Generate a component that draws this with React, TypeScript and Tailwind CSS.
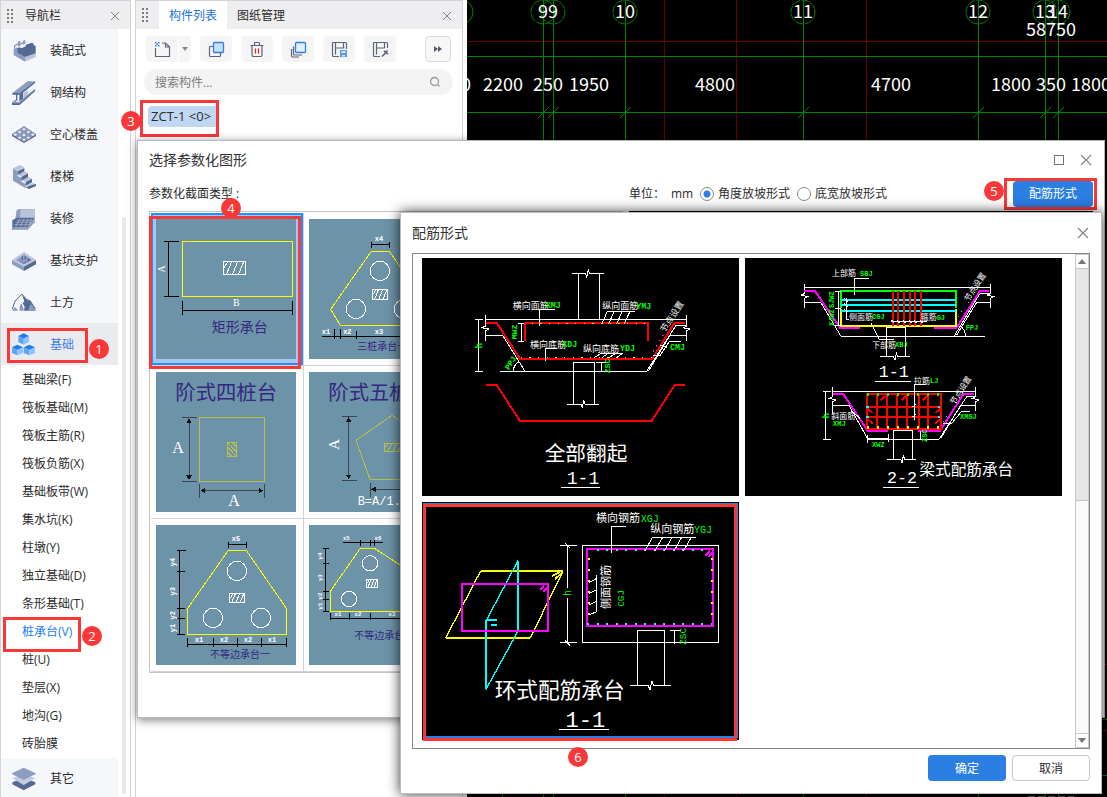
import type { ReactNode } from "react";

const SANS = "'Open Sans','Noto Sans CJK SC',sans-serif";
const MONO = "'Liberation Mono','Noto Sans CJK SC',monospace";
const SERIF = "'Liberation Serif','Noto Sans CJK SC',serif";

type LabelProps = {
  x: number;
  y: number;
  s: number;
  c?: string;
  f?: string;
  mid?: boolean;
  rot?: number;
  w?: number;
  children: ReactNode;
};

/* Text inside a drawing; `rot` turns it around its own centre. */
function Label({ x, y, s, c = "#fff", f = MONO, mid, rot, w = 400, children }: LabelProps) {
  const turned = rot !== undefined;
  return (
    <text
      x={x}
      y={turned ? y + s * 0.35 : y}
      fontSize={s}
      fill={c}
      fontFamily={f}
      fontWeight={w}
      textAnchor={mid || turned ? "middle" : "start"}
      transform={turned ? `rotate(${rot} ${x} ${y})` : undefined}
    >
      {children}
    </text>
  );
}

function Line({ d, c = "#fff", w = 3, dash }: { d: string; c?: string; w?: number; dash?: string }) {
  return <path d={d} fill="none" stroke={c} strokeWidth={w} strokeDasharray={dash} />;
}

function Hatch({ x, y, w, h, c = "#fff" }: { x: number; y: number; w: number; h: number; c?: string }) {
  const q = w / 4;
  return (
    <Line
      c={c}
      d={`M${x} ${y}h${w}v${h}h${-w}zM${x + 3} ${y + h / 2}l${q * 0.7} ${-h / 2}M${x + q * 0.6} ${y + h}l${q} ${-h}M${x + q * 1.7} ${y + h}l${q} ${-h}M${x + q * 2.8} ${y + h}l${q} ${-h}`}
    />
  );
}

/* ---------- navigation icons ---------- */

const DK = "#546a93";
const MD = "#8d9dbf";
const LT = "#b9c4dc";

function NavIcon({ name }: { name: string }) {
  const box: Record<string, string> = {
    precast: "36 117 72 72",
    steel: "36 240 72 72",
    hollow: "36 366 72 72",
    stairs: "36 492 72 72",
    finish: "36 618 72 72",
    pit: "36 747 72 72",
    earth: "36 872 72 72",
    base: "36 40 72 72",
    other: "36 1338 72 72",
  };
  const art: Record<string, ReactNode> = {
    precast: (
      <>
        <path d="M42 136l12-6v-5l4-3 3 3v5l8-3v-5l4-2 3 2v9l-30 12-4 8z" fill={MD} />
        <path d="M46 138l8-3v5l-8 4zM61 134l8-3v5l-8 3z" fill="#f5f7fa" />
        <path d="M41 148l12-6v16l22 13v14l-34-20z" fill={MD} />
        <path d="M75 171l32-13v13l-32 14z" fill={LT} />
        <path d="M52 144l8-2 4 3 14-6-2-4 20-7 5 3v5l6 2v22l-32 11-23-13z" fill={DK} />
      </>
    ),
    steel: (
      <>
        <path d="M37 276l46-35h22l-47 36z" fill={MD} />
        <path d="M58 277l47-36v5l-36 29v20l-11 6z" fill={DK} />
        <path d="M37 276h21v5h-6v18h-4v-18H37z" fill={DK} />
        <path d="M70 277l14-10v16l-14 12z" fill={LT} />
        <path d="M60 302l45-38v7l-46 41H36v-6h18z" fill={DK} />
        <path d="M36 304l12-9v7l8 1 46-37 3 1-46 40H36z" fill={MD} />
      </>
    ),
    hollow: (
      <>
        <path d="M36 400l36-24 36 24v5l-36 21-36-21z" fill={DK} />
        <path d="M36 400l36-24 36 24-36 22z" fill={MD} />
        <path
          d="M72 380l8 5-8 5-8-5zM59 388l8 5-8 5-8-5zM85 388l8 5-8 5-8-5zM72 397l8 5-8 5-8-5zM46 396l8 5-8 5-8-5zM98 396l8 5-8 5-8-5zM59 405l8 5-8 5-8-5zM85 405l8 5-8 5-8-5zM72 412l8 4-8 5-8-5z"
          fill="#eef1f8"
          stroke={DK}
          strokeWidth="1.5"
        />
      </>
    ),
    stairs: (
      <>
        <path d="M39 502l14 9v14l11 5v12l13 6v14l-38-23z" fill={MD} />
        <path d="M39 502l20-10 14 7-20 11zM53 521l20-10 10 5-19 11zM64 537l20-10 10 5-18 11zM80 554l18-9 10 6-20 9z" fill={LT} />
        <path d="M53 511l20-10v10l-20 11zM64 528l20-11v11l-20 11zM77 543l19-10v11l-19 11zM86 556l22-7v6l-21 9-10-5z" fill={DK} />
      </>
    ),
    finish: (
      <>
        <path d="M50 627l8-3h46v36l-6 4H44z" fill={MD} />
        <path d="M62 625h43v35H60z" fill={LT} />
        <path d="M37 658l13-8h54l-21 29-46 1z" fill={DK} />
        <path d="M36 680l45-1 24-25v9l-22 23H36z" fill={MD} />
        <path d="M51 658h46M47 664h45M42 671h46M60 653l-13 24M72 653l-11 24M84 653l-9 24M95 653l-8 20" stroke={LT} strokeWidth="1.8" />
      </>
    ),
    pit: (
      <>
        <path d="M36 780l36 19v14l-36-20z" fill={MD} />
        <path d="M108 780l-36 19v14l36-20z" fill={DK} />
        <path d="M36 780l36-24 36 24-36 20z" fill={LT} />
        <path d="M50 780l22-14 22 14-22 12z" fill={DK} />
        <path d="M60 771l5-3v13h4v-15l5-3v16h4v-12l5 4v12l-12 6-12-5z" fill={MD} />
        <path d="M50 780l10-7v12z" fill={MD} />
      </>
    ),
    earth: (
      <>
        <path d="M37 926l8-24 7-6 14-15 13 16 11 4 17 26" fill="none" stroke={DK} strokeWidth="3" />
        <path d="M65 882l8 22-5 8 7 19h-9l-4-20-3-6z" fill="#f5f7fa" />
        <path d="M66 883l15 16 10 4 16 28H72l2-12-6-10 5-6z" fill={DK} />
        <path d="M58 931l2-16 5-6 7 22z" fill={MD} />
        <path d="M37 930l8-10 8 8v3H37zM92 910l15 21H84z" fill={MD} />
      </>
    ),
    base: (
      <>
        <path d="M55 49l16-8 16 8-16 8zM36 83l16-8 17 8-17 8zM71 83l17-8 17 8-17 8z" fill="#1f7af0" />
        <path d="M55 49l16 8v18l-16-8zM36 83l16 8v16l-16-7zM71 83l17 8v16l-17-7z" fill="#5ba3f8" />
        <path d="M87 49l-16 8v18l16-8zM69 83l-17 8v16l17-7zM105 83l-17 8v16l17-7z" fill="#8cc2ff" />
      </>
    ),
    other: (
      <>
        <path d="M37 1384l34-14 35 14v6l-35 18-34-18z" fill={DK} />
        <path d="M37 1372l34-14 35 14-35 20z" fill="#c4cde0" />
        <path d="M36 1357l35-17 36 17v2l-36 18-35-18z" fill={MD} />
      </>
    ),
  };
  return (
    <svg viewBox={box[name]} className="size-6 shrink-0" aria-hidden="true">
      {art[name]}
    </svg>
  );
}

/* ---------- toolbar icons ---------- */

function ToolIcon({ name }: { name: string }) {
  const g = "#5b6478";
  const b = "#2f7fe6";
  const art: Record<string, ReactNode> = {
    new: (
      <>
        <path d="M1.5 7v8.5h14V6l-4-4H8M11.500 2v4h4" fill="none" stroke={g} strokeWidth="1.200" />
        <path d="M1 1h1.500v1.500H1zM4 1h1.500v1.500H4zM2.500 2.500H4V4H2.500zM1 4h1.500v1.500H1zM4 4h1.500v1.500H4z" fill={b} />
      </>
    ),
    copy: (
      <>
        <path d="M5 5.500H2.500a1 1 0 0 0-1 1v8a1 1 0 0 0 1 1h9a1 1 0 0 0 1-1V12" fill="none" stroke={g} strokeWidth="1.200" />
        <rect x="5.500" y="1.500" width="10" height="10" rx="1" fill="#c9dffb" stroke={b} strokeWidth="1.300" />
      </>
    ),
    trash: (
      <>
        <path d="M1.500 4.500h13M5.500 4V2.500a1 1 0 0 1 1-1h3a1 1 0 0 1 1 1V4M3 5v9a1.500 1.500 0 0 0 1.500 1.500h7A1.500 1.500 0 0 0 13 14V5" fill="none" stroke={g} strokeWidth="1.200" />
        <path d="M6.500 7.500v5M9.500 7.500v5" stroke="#e02020" strokeWidth="1.200" />
      </>
    ),
    layers: (
      <>
        <path d="M3.500 5.500v7.500a1 1 0 0 0 1 1H12M1.500 8v7a1 1 0 0 0 1 1H9" fill="none" stroke={g} strokeWidth="1.200" />
        <rect x="5.500" y="1.500" width="10" height="10" rx="1" fill="#e3effd" stroke={b} strokeWidth="1.300" />
      </>
    ),
    save: (
      <>
        <path d="M8 15.500H2.500a1 1 0 0 1-1-1v-12a1 1 0 0 1 1-1h12a1 1 0 0 1 1 1V8M4.500 2v11.500M4.500 7h9M12.500 2v5" fill="none" stroke={g} strokeWidth="1.200" />
        <rect x="9" y="9" width="7" height="7" fill="#5b9bea" />
        <path d="M10.500 10h4v2h-4zM11 14h3v1.500h-3z" fill="#d6e6fb" />
      </>
    ),
    edit: (
      <>
        <path d="M8 15.500H2.500a1 1 0 0 1-1-1v-12a1 1 0 0 1 1-1h12a1 1 0 0 1 1 1V7M4.500 2v11.500M4.500 7h8M12.500 2v5" fill="none" stroke={g} strokeWidth="1.200" />
        <path d="M10 15.500l4-4M12 10l4 3M13.500 11.500l2-2" stroke={g} strokeWidth="1.600" />
      </>
    ),
  };
  return (
    <svg viewBox="0 0 17 17" className="size-[17px]" aria-hidden="true">
      {art[name]}
    </svg>
  );
}

function Cross({ className }: { className: string }) {
  return (
    <svg viewBox="0 0 12 12" className={className} aria-hidden="true">
      <path d="M1 1l10 10M11 1L1 11" stroke="#858585" strokeWidth="1.200" fill="none" />
    </svg>
  );
}

function Grip() {
  return (
    <svg viewBox="0 0 6 14" className="h-3.5 w-1.5 shrink-0" aria-hidden="true">
      <path d="M0 0h2v2H0zM4 0h2v2H4zM0 4h2v2H0zM4 4h2v2H4zM0 8h2v2H0zM4 8h2v2H4zM0 12h2v2H0zM4 12h2v2H4z" fill="#7b7b7b" />
    </svg>
  );
}

/* ---------- section-type thumbnails ---------- */

const NAVY = "#33297f";
const Y = "#ffff00";
const K = "#000";
const OLIVE = "#b9c04a";

const thumbs: { name: string; box: string; art: ReactNode }[] = [
  {
    name: "矩形承台",
    box: "48 42 420 420",
    art: (
      <>
        <Line c={Y} d="M127 109H458V274H127Z" />
        <Line c={K} d="M72 109H117M85 109V274M72 274H117M127 287V329M458 287V329M127 316H458" />
        <Hatch x={249} y={169} w={66} h={40} />
        <Label x={65} y={192} s={30} f={SERIF} rot={-90}>A</Label>
        <Label x={289} y={304} s={30} f={SERIF} mid>B</Label>
        <Label x={215} y={382} s={42} c={NAVY}>矩形承台</Label>
      </>
    ),
  },
  {
    name: "三桩承台一",
    box: "507 42 420 420",
    art: (
      <>
        <Line c={K} d="M694 119H749M694 110V128M749 110V128M546 394H900M583 372V402M601 372V402M649 378V402" />
        <Line c={Y} d="M601 361L572 313L694 139H748L870 313L841 361Z" />
        <circle cx="720" cy="198" r="29" fill="none" stroke="#fff" strokeWidth="3" />
        <circle cx="648" cy="312" r="29" fill="none" stroke="#fff" strokeWidth="3" />
        <circle cx="792" cy="312" r="29" fill="none" stroke="#fff" strokeWidth="3" />
        <Hatch x={697} y={253} w={46} h={30} />
        <Label x={717} y={109} s={21} w={700} mid>x4</Label>
        <Label x={558} y={386} s={21} w={700} mid>x1</Label>
        <Label x={622} y={386} s={21} w={700} mid>x2</Label>
        <Label x={717} y={386} s={21} w={700} mid>x3</Label>
        <Label x={652} y={436} s={30} c={NAVY}>三桩承台一</Label>
      </>
    ),
  },
  {
    name: "阶式四桩台",
    box: "48 501 420 420",
    art: (
      <>
        <Label x={106} y={586} s={61} c={NAVY}>阶式四桩台</Label>
        <Line c={OLIVE} d="M179 637H373V829H179Z" />
        <Line c="#3b4650" d="M147 645V822M127 637H171M127 829H171M179 838V880M373 838V880M190 857H362" />
        <path d="M147 639l-8 15h16zM147 826l-8-15h16zM181 857l15-8v16zM371 857l-15-8v16z" fill="#111" />
        <Line c={OLIVE} d="M262 712H290V755H262ZM262 725l28 30M262 712l28 30M276 712l14 15M262 740l14 15" />
        <Label x={114} y={743} s={48} f={SERIF} mid>A</Label>
        <Label x={282} y={903} s={48} f={SERIF} mid>A</Label>
      </>
    ),
  },
  {
    name: "阶式五桩台",
    box: "507 501 420 420",
    art: (
      <>
        <Label x={565} y={586} s={61} c={NAVY}>阶式五桩台</Label>
        <Line c={OLIVE} d="M756 631L648 706L690 823H822L864 706Z" />
        <Line c="#3b4650" d="M626 645V818M606 634H650M606 826H650M690 835V876M700 853H900" />
        <path d="M626 636l-8 15h16zM626 824l-8-15h16zM692 853l15-8v16z" fill="#111" />
        <Hatch x={733} y={714} w={58} h={26} c={OLIVE} />
        <Label x={582} y={718} s={46} f={SERIF} rot={-90}>A</Label>
        <Label x={653} y={900} s={36}>B=A/1.5</Label>
      </>
    ),
  },
  {
    name: "不等边承台一",
    box: "48 255 420 420",
    art: (
      <>
        <Line c={K} d="M118 331V583M110 331H138M110 394H134M110 505H134M110 535H134M110 583H134M265 314H320M265 306V323M320 306V323M143 613H440M143 594V620M220 594V620M292 594V620M364 594V620M440 594V620" />
        <Line c={Y} d="M143 583V505L265 331H319L439 505V583Z" />
        <circle cx="291" cy="393" r="29" fill="none" stroke="#fff" strokeWidth="3" />
        <circle cx="219" cy="534" r="29" fill="none" stroke="#fff" strokeWidth="3" />
        <circle cx="363" cy="534" r="29" fill="none" stroke="#fff" strokeWidth="3" />
        <Hatch x={268} y={460} w={46} h={28} />
        <Label x={288} y={304} s={21} w={700} mid>x5</Label>
        <Label x={97} y={366} s={21} w={700} rot={-90}>y4</Label>
        <Label x={97} y={454} s={21} w={700} rot={-90}>y3</Label>
        <Label x={97} y={526} s={21} w={700} rot={-90}>y2</Label>
        <Label x={97} y={564} s={21} w={700} rot={-90}>y1</Label>
        <Label x={177} y={606} s={21} w={700} mid>x1</Label>
        <Label x={252} y={606} s={21} w={700} mid>x2</Label>
        <Label x={324} y={606} s={21} w={700} mid>x2</Label>
        <Label x={396} y={606} s={21} w={700} mid>x1</Label>
        <Label x={210} y={654} s={30} c={NAVY}>不等边承台一</Label>
      </>
    ),
  },
  {
    name: "不等边承台二",
    box: "507 255 420 420",
    art: (
      <>
        <Line c={K} d="M557 325V514M548 325H567M548 370H567M548 454H567M548 478H567M548 514H567M609 308H691M679 308H729M661 299V317M691 299V317M703 299V317M571 535H860M571 518V540M628 518V540M691 518V540" />
        <Line c={Y} d="M571 514V454L661 325H703L810 394V514Z" />
        <circle cx="690" cy="370" r="23" fill="none" stroke="#fff" strokeWidth="3" />
        <circle cx="627" cy="477" r="23" fill="none" stroke="#fff" strokeWidth="3" />
        <Hatch x={679} y={418} w={34} h={24} />
        <Label x={619} y={299} s={17} w={700} mid>x5</Label>
        <Label x={714} y={299} s={17} w={700} mid>x6</Label>
        <Label x={539} y={348} s={17} w={700} rot={-90}>y4</Label>
        <Label x={539} y={413} s={17} w={700} rot={-90}>y3</Label>
        <Label x={539} y={468} s={17} w={700} rot={-90}>y2</Label>
        <Label x={539} y={498} s={17} w={700} rot={-90}>y1</Label>
        <Label x={594} y={528} s={17} w={700} mid>x1</Label>
        <Label x={654} y={528} s={17} w={700} mid>x2</Label>
        <Label x={756} y={528} s={17} w={700} mid>x3</Label>
        <Label x={643} y={597} s={30} c={NAVY}>不等边承台二</Label>
      </>
    ),
  },
];

/* ---------- rebar-layout drawings ---------- */

const R = "#ff0000";
const G = "#00ff00";
const M = "#ff00ff";
const C = "#00ffff";

const allUp = (
  <>
    <Line d="M535 343V206M598 343V206M516 206H556L560 216L565 194L569 206H612M256 343H860M257 330V364L244 368L266 372L257 378V407M257 391H308L375 499M300 499H740L828 361H860M860 391H810L745 499M860 330V364L848 368L870 372L860 378V407" />
    <Line d="M225 344H248M236 344V499M225 499H248M364 356V409M355 356H372M355 409H372" />
    <Line d="M520 597V472H584V597M501 598H543L547 610L551 586L555 598H597M589 472H620M605 472V499M340 497Q342 478 358 470" />
    <Line c={R} w={6} d="M258 353H290L360 462H757L824 353H855M375 408V353H744V408M258 540H290L360 648H755L824 540H855" />
    <Line c={Y} w={4} dash="4 22" d="M395 356H735M362 457H755" />
    <Line c={M} w={4} dash="4 14" d="M760 440L815 350" />
    <Line d="M418 363V313H465M605 358L622 319H705M625 358L643 319M649 358L667 319M672 358L690 319M436 467V430H470M583 458L603 445H668M605 458L625 445M628 458L646 445M650 458L667 445M758 452H780L808 409H843M780 420L800 428" />
    <Label x={338} y={311} s={27}>横向面筋</Label>
    <Label x={437} y={309} s={25} c={G} w={700}>XMJ</Label>
    <Label x={607} y={313} s={27}>纵向面筋</Label>
    <Label x={709} y={312} s={25} c={G} w={700}>YMJ</Label>
    <Label x={390} y={428} s={27}>横向底筋</Label>
    <Label x={487} y={426} s={25} c={G} w={700}>XDJ</Label>
    <Label x={549} y={440} s={27}>纵向底筋</Label>
    <Label x={660} y={438} s={25} c={G} w={700}>YDJ</Label>
    <Label x={810} y={436} s={25} c={G} w={700}>CMJ</Label>
    <Label x={236} y={422} s={28} c={G} w={700} rot={-90}>h</Label>
    <Label x={342} y={381} s={24} c={G} w={700} rot={-90}>MWZ</Label>
    <Label x={331} y={474} s={24} c={G} w={700} rot={-58}>PPJ</Label>
    <Label x={621} y={483} s={24} c={G} w={700} rot={-90}>ZSC</Label>
    <Label x={816} y={335} s={26} rot={-57}>节点设置</Label>
    <Label x={434} y={767} s={62}>全部翻起</Label>
    <Label x={549} y={836} s={54} mid>1-1</Label>
    <Line d="M483 847H600" />
  </>
);

const beamType = (
  <>
    <Line d="M193 247H752M193 237V266L183 270L202 275L193 280V308M193 292H242L303 394H735M752 237V266L742 270L762 275L752 280V308M642 394L720 265H752M752 292H710L650 390" />
    <Line c={M} w={6} d="M193 258H225L300 368H360M582 368H650L720 258H748M278 567H310L383 678H443M535 678H600L670 567H702" />
    <Line c={G} w={6} d="M303 310V258H648V310" />
    <Line c={Y} w={6} d="M303 312V362H648V312" />
    <Line c={C} w={6} d="M303 285H648M303 300H648M303 318H648" />
    <Line c={R} w={6} d="M459 258V362M474 258V362M492 258V362M510 258V362M525 258V362M543 258V362" />
    <Line d="M452 349H560M454 344L462 354M470 344L478 354M488 344L496 354M506 344L514 354M521 344L529 354M539 344L547 354M343 270V220H387M319 280V343H328M312 280L325 290M312 296L325 306M312 312L325 322M394 355L418 403H462M294 258V362M285 258H302M285 310H302M285 362H302M677 394Q676 374 660 363" />
    <Line d="M439 454V367H497V454M420 454H460L465 464L469 444L473 454H510M405 529H513" />
    <Line c={C} dash="3 14" d="M655 335L715 248M610 650L670 560" />
    <Label x={276} y={214} s={24}>上部筋</Label>
    <Label x={360} y={213} s={21} c={G} w={700}>SBJ</Label>
    <Label x={327} y={344} s={24}>侧面筋</Label>
    <Label x={396} y={342} s={21} c={G} w={700}>CGJ</Label>
    <Label x={542} y={346} s={24}>箍筋</Label>
    <Label x={590} y={345} s={21} c={G} w={700}>GJ</Label>
    <Label x={396} y={428} s={24}>下部筋</Label>
    <Label x={465} y={426} s={21} c={G} w={700}>XBJ</Label>
    <Label x={677} y={375} s={21} c={G} w={700}>FPJ</Label>
    <Label x={276} y={284} s={21} c={G} w={700} rot={-90}>SJWZ</Label>
    <Label x={276} y={338} s={21} c={G} w={700} rot={-90}>XJWZ</Label>
    <Label x={705} y={246} s={24} rot={-57}>节点设置</Label>
    <Label x={461} y={516} s={50} mid>1-1</Label>

    <Line d="M278 559H707M278 547V575L268 580L288 585L278 590V627M278 601H327L384 703H597L680 575H707M707 601H662L602 700M707 547V575L697 580L717 585L707 590V618M257 559V703M249 559H273M249 703H273M335 618L360 640M383 690V714M445 688V712M383 700H445M540 678V703M610 655H635L665 619H690" />
    <Line c={R} w={6} d="M382 567H602V672H382ZM412 567V672M442 567V672M472 567V672M502 567V672M537 567V672M565 567V672M382 606H602M382 636H602M422 586L440 570M484 586L500 570M548 586L563 570M384 612L398 624M384 644L398 656M600 612L586 624M600 644L586 656" />
    <Line c={G} w={7} dash="6 24" d="M380 568H602" />
    <Line c={Y} w={7} dash="6 24" d="M380 667H602" />
    <Line c={C} w={7} dash="6 24" d="M382 603V640M597 603V640" />
    <Line d="M523 645V538H558M518 606L528 598M518 636L528 628" />
    <Line d="M460 762V676H518V762M441 763H482L486 774L490 752L494 763H528M429 847H537" />
    <Label x={522} y={536} s={24}>拉筋</Label>
    <Label x={570} y={534} s={21} c={G} w={700}>LJ</Label>
    <Label x={274} y={641} s={24}>斜面筋</Label>
    <Label x={279} y={662} s={21} c={G} w={700}>XMJ</Label>
    <Label x={396} y={725} s={21} c={G} w={700}>XWZ</Label>
    <Label x={660} y={642} s={21} c={G} w={700}>XMSJ</Label>
    <Label x={257} y={632} s={26} c={G} w={700} rot={-90}>h</Label>
    <Label x={554} y={692} s={21} c={G} w={700} rot={-90}>ZSC</Label>
    <Label x={662} y={556} s={24} rot={-57}>节点设置</Label>
    <Label x={486} y={835} s={50} mid>2-2</Label>
    <Label x={538} y={811} s={47}>梁式配筋承台</Label>
  </>
);

const ringType = (
  <>
    <Line c={Y} w={5} d="M242 228H489M391 429H137" />
    <Line c={Y} w={4} d="M242 228L137 429M489 228L391 429" />
    <Line c={Y} w={5} d="M456 243L480 231M465 252L487 232" />
    <Line c={C} w={5} d="M354 197V408M258 378V583M258 375H291M272 389H291" />
    <Line c={C} w={4} d="M354 197L258 378M354 408L258 583" />
    <Line c={M} w={6} d="M186 267H444V408H186ZM422 284L432 271M430 291L442 277M560 162H938V392H560ZM916 181L930 168M925 187L938 172" />
    <Line d="M547 151H956V442H547ZM503 151V280M503 308V443M480 151H530M480 443H530M495 145L510 159M495 437L510 451" />
    <Line c={C} w={6} dash="6 22.500" d="M590 166H915M562 388H935" />
    <Line c={Y} w={6} dash="6 27" d="M566 190V365M935 190V365" />
    <Line d="M634 174V94H678M735 168L757 127H888M764 168L788 127M793 168L816 127M822 168L845 127M850 168L874 127M590 240V350M566 264L590 250M566 296L590 284M566 330L590 318M566 360L590 350" />
    <Line d="M712 571V406H794V571M690 571H744L750 584L756 558L761 571H813M810 406H842M824 406V448" />
    <Label x={588} y={81} s={33}>横向钢筋</Label>
    <Label x={722} y={80} s={30} c={G}>XGJ</Label>
    <Label x={751} y={115} s={33}>纵向钢筋</Label>
    <Label x={882} y={114} s={30} c={G}>YGJ</Label>
    <Label x={619} y={276} s={33} rot={-90}>侧面钢筋</Label>
    <Label x={662} y={310} s={28} c={G} rot={-90}>CGJ</Label>
    <Label x={503} y={294} s={30} c={G} rot={-90}>h</Label>
    <Label x={848} y={424} s={28} c={G} rot={-90}>ZSC</Label>
    <Label x={284} y={609} s={65}>环式配筋承台</Label>
    <Label x={556} y={696} s={66} mid>1-1</Label>
    <Line d="M477 703H627" />
  </>
);

/* ---------- axis grid behind the windows ---------- */

function AxisCanvas() {
  const axes: [number, string][] = [
    [543, "9"],
    [553, "9"],
    [625, "10"],
    [803, "11"],
    [978, "12"],
    [1045, "13"],
    [1058, "14"],
  ];
  const dims: [number, string][] = [
    [466, "0"],
    [503, "2200"],
    [548, "250"],
    [589, "1950"],
    [715, "4800"],
    [891, "4700"],
    [1011, "1800"],
    [1051, "350"],
    [1091, "1800"],
  ];
  return (
    <svg viewBox="467 0 640 797" className="h-[797px] w-[640px]" fontFamily="'Noto Sans CJK SC',sans-serif">
      <g stroke="#640000" fill="none">
        <path d="M467 41.500H1107M664.500 0V797M736.500 0V797M866.500 0V797M467 664.500H1107M467 730.500H1107" />
      </g>
      <g stroke="#008400" fill="none">
        <path d="M467 56.500H1107M467 112.500H1107M467 719.500H1107M467 775.500H1107M502.500 780V797" />
        <circle cx="461" cy="12" r="12" />
        {axes.map(([x]) => (
          <g key={x}>
            <circle cx={x} cy="12" r="12" strokeDasharray="8 1" />
            <path d={`M${x + 0.5} 0V797M${x - 5} 118l11-11`} />
          </g>
        ))}
      </g>
      <path d="M1028 796.500H1074" stroke="#666" strokeDasharray="7 3" />
      <g fill="#fff" fontSize="18" textAnchor="middle">
        {axes.map(([x, t]) => (
          <text key={x} x={x} y="18">{t}</text>
        ))}
        <text x="1051" y="36">58750</text>
        {dims.map(([x, t]) => (
          <text key={x} x={x} y="91">{t}</text>
        ))}
      </g>
    </svg>
  );
}

/* ---------- data ---------- */

const categories: [string, string][] = [
  ["precast", "装配式"],
  ["steel", "钢结构"],
  ["hollow", "空心楼盖"],
  ["stairs", "楼梯"],
  ["finish", "装修"],
  ["pit", "基坑支护"],
  ["earth", "土方"],
];

const members = [
  "基础梁(F)",
  "筏板基础(M)",
  "筏板主筋(R)",
  "筏板负筋(X)",
  "基础板带(W)",
  "集水坑(K)",
  "柱墩(Y)",
  "独立基础(D)",
  "条形基础(T)",
  "桩承台(V)",
  "桩(U)",
  "垫层(X)",
  "地沟(G)",
  "砖胎膜",
];

function Badge({ n, className }: { n: number; className: string }) {
  return (
    <span className={`absolute flex size-5 items-center justify-center rounded-full bg-[#fb3838] text-[13px] leading-5 text-white ${className}`}>
      {n}
    </span>
  );
}

function Mark({ className }: { className: string }) {
  return <span className={`pointer-events-none absolute border-3 border-[#fb3838] ${className}`} />;
}

/* ---------- panels ---------- */

function NavPanel() {
  return (
    <nav className="flex w-[131px] shrink-0 flex-col border-x border-t border-[#d4d4d6] bg-white">
      <header className="flex h-7 items-center bg-[#eeeef0] pt-0.5 pr-2.5 pl-1.5">
        <Grip />
        <h2 className="ml-3 flex-1">导航栏</h2>
        <button type="button" aria-label="关闭导航栏">
          <Cross className="size-2.5" />
        </button>
      </header>
      <div className="flex flex-1">
        <div className="flex w-[117px] flex-col">
          {categories.map(([icon, name]) => (
            <button key={name} type="button" className="flex h-[42px] shrink-0 items-center gap-3.5 bg-[#f5f7fa] pt-0.5 pl-[11px]">
              <NavIcon name={icon} />
              {name}
            </button>
          ))}
          <button type="button" className="relative flex h-[42px] shrink-0 items-center gap-3.5 bg-[#eaebef] pt-0.5 pl-[11px] text-[#3f7de0]">
            <NavIcon name="base" />
            基础
            <Mark className="top-[5px] left-1.5 h-[35px] w-[81px]" />
            <Badge n={1} className="top-4 left-[88px]" />
          </button>
          <ul className="flex flex-1 flex-col pt-px">
            {members.map((m) => (
              <li key={m} className="relative h-7">
                <button type="button" className={`h-7 pl-[21px] ${m === "桩承台(V)" ? "text-[#1a7df0]" : ""}`}>
                  {m}
                </button>
                {m === "桩承台(V)" && (
                  <>
                    <Mark className="-top-px left-0.5 h-[35px] w-[78px]" />
                    <Badge n={2} className="top-2 left-[81px]" />
                  </>
                )}
              </li>
            ))}
          </ul>
          <button type="button" className="flex h-10 shrink-0 items-center gap-3.5 bg-[#f5f7fa] pt-0.5 pl-[11px]">
            <NavIcon name="other" />
            其它
          </button>
        </div>
        <div className="mt-[188px] mb-1 ml-1 w-1 rounded-full bg-[#e9e9ea]" />
      </div>
    </nav>
  );
}

function ListPanel() {
  return (
    <section className="ml-1 flex w-[328px] shrink-0 flex-col border-x border-t border-[#d4d4d6] bg-white">
      <header className="flex h-7 items-center bg-[#eeeef0] pr-2.5 pl-1.5">
        <Grip />
        <button type="button" className="ml-[11px] h-7 w-[68px] bg-white pt-0.5 text-[#1a72e0]">构件列表</button>
        <button type="button" className="ml-2.5 pt-0.5">图纸管理</button>
        <span className="flex-1" />
        <button type="button" aria-label="关闭构件列表" className="pt-0.5">
          <Cross className="size-2.5" />
        </button>
      </header>
      <div className="flex gap-[9px] pt-[7px] pr-[11px] pl-2.5">
        <div className="flex gap-px">
          <button type="button" aria-label="新建" className="flex h-[26px] w-8 items-center justify-center rounded-l bg-[#f5f5f6]">
            <ToolIcon name="new" />
          </button>
          <button type="button" aria-label="新建选项" className="flex h-[26px] w-3 items-center justify-center rounded-r bg-[#f5f5f6]">
            <svg viewBox="0 0 6 4" className="h-1 w-1.5" aria-hidden="true"><path d="M0 0h6L3 4z" fill="#888" /></svg>
          </button>
        </div>
        {[
          ["copy", "复制"],
          ["trash", "删除"],
          ["layers", "层间复制"],
          ["save", "存档"],
          ["edit", "提取"],
        ].map(([icon, label]) => (
          <button key={icon} type="button" aria-label={label} className="flex h-[26px] w-8 items-center justify-center rounded bg-[#f5f5f6]">
            <ToolIcon name={icon} />
          </button>
        ))}
        <span className="flex-1" />
        <button type="button" aria-label="更多" className="flex h-[26px] w-[26px] items-center justify-center rounded border border-[#dcdcde] bg-[#f7f7f8]">
          <svg viewBox="0 0 8 6" className="h-1.5 w-2" aria-hidden="true"><path d="M0 0l4 3-4 3zM4 0l4 3-4 3z" fill="#555d6c" /></svg>
        </button>
      </div>
      <label className="mt-[7px] mr-[9px] ml-2 flex h-[26px] items-center rounded-full bg-[#f3f3f4] pr-3 pl-[11px]">
        <input aria-label="搜索构件" placeholder="搜索构件..." className="min-w-0 flex-1 bg-transparent pt-0.5 outline-none placeholder:text-[#7c7c7c]" />
        <svg viewBox="0 0 12 12" className="size-3" aria-hidden="true">
          <circle cx="5.500" cy="5.500" r="4" fill="none" stroke="#999" strokeWidth="1.300" />
          <path d="M8.500 8.500l2 2" stroke="#999" strokeWidth="1.300" />
        </svg>
      </label>
      <div className="relative mt-[11px] ml-3">
        <button type="button" className="block h-[21px] w-[68px] rounded-l bg-[#bfd7f2] pl-[3px] text-left text-[13px] leading-[21px] whitespace-nowrap">
          ZCT-1 &lt;0&gt;
        </button>
        <Mark className="-top-1.5 -left-2 h-[37px] w-[79px]" />
        <Badge n={3} className="top-[5px] -left-[27px]" />
      </div>
    </section>
  );
}

function SectionDialog() {
  return (
    <section
      role="dialog"
      aria-label="选择参数化图形"
      className="absolute top-[140px] right-0.5 left-[137px] flex h-[578px] flex-col border border-[#b9b9b9] bg-white px-[11px] shadow-[0_2px_9px_rgba(0,0,0,0.5)]"
    >
      <header className="flex h-9 items-center pt-0.5">
        <h2 className="flex-1 text-sm text-[#333]">选择参数化图形</h2>
        <button type="button" aria-label="最大化" className="mr-4 h-2.5 w-2.5 border border-[#777]" />
        <button type="button" aria-label="关闭" className="mr-px">
          <Cross className="size-3" />
        </button>
      </header>
      <div className="flex h-[34px] items-center">
        <span className="w-[480px] shrink-0">参数化截面类型 :</span>
        <span className="w-[42px]">单位：</span>
        <span className="w-[29px]">mm</span>
        <label className="flex items-center gap-1">
          <input type="radio" name="slope" defaultChecked className="size-3.5 appearance-none rounded-full border border-[#888] bg-[radial-gradient(circle,#2b7fe3_3px,#fff_4px)]" />
          角度放坡形式
        </label>
        <label className="ml-[7px] flex items-center gap-1">
          <input type="radio" name="slope" className="size-3.5 appearance-none rounded-full border border-[#888]" />
          底宽放坡形式
        </label>
        <span className="flex-1" />
        <div className="relative">
          <button type="button" className="block h-[26px] w-20 rounded-sm bg-[#2b7fe3] text-white">配筋形式</button>
          <Mark className="-top-[3px] -left-[9px] h-8 w-[93px]" />
          <Badge n={5} className="top-0 -left-[29px]" />
        </div>
      </div>
      <div className="relative mb-11 flex flex-1 gap-1.5">
        <div className="flex w-[474px] flex-col border border-[#c4c4c4] pt-px pl-px">
          <ul className="grid grid-cols-[153px_153px] content-start">
            {thumbs.map((t, i) => (
              <li key={t.name} className="h-[153px] border-r border-b border-[#d2d2d2]">
                <button
                  type="button"
                  aria-label={t.name}
                  className={
                    i === 0
                      ? "block h-[152px] w-[152px] border-2 border-[#1e90ff] bg-[#a3c8f5] pt-1 pr-[5px] pb-1.5 pl-[3px]"
                      : "block h-[152px] w-[152px] pt-1.5 pr-[7px] pb-1.5 pl-[5px]"
                  }
                >
                  <svg viewBox={t.box} className="block size-[140px] bg-[#6d93a9]" shapeRendering="crispEdges">
                    {t.art}
                  </svg>
                </button>
              </li>
            ))}
          </ul>
        </div>
        <div className="flex-1 bg-black" />
        <Mark className="top-[5px] left-0 h-[153px] w-[152px]" />
        <Badge n={4} className="-top-[13px] left-[72px]" />
      </div>
    </section>
  );
}

function RebarDialog() {
  return (
    <section
      role="dialog"
      aria-label="配筋形式"
      className="absolute top-[212px] right-[5px] left-[400px] flex flex-col border border-[#bdbdbd] bg-white px-[11px] pb-3 shadow-[0_0_12px_rgba(0,0,0,0.8)]"
    >
      <header className="flex h-10 items-center">
        <h2 className="flex-1 text-sm text-[#333]">配筋形式</h2>
        <button type="button" aria-label="关闭" className="mr-px">
          <Cross className="size-3" />
        </button>
      </header>
      <div className="flex h-[496px] border border-[#84888e]">
        <div className="flex flex-1 flex-wrap content-start gap-1.5 pt-1 pl-[9px]">
          {[
            { name: "全部翻起", box: "66 159 951 714", art: allUp },
            { name: "梁式配筋承台", box: "15 159 951 714", art: beamType },
            { name: "环式配筋承台", box: "66 21 951 714", art: ringType },
          ].map((p, i) => (
            <button key={p.name} type="button" aria-label={p.name} className="relative h-[238px] w-[317px]">
              <svg viewBox={p.box} className="block h-[238px] w-[317px] bg-black" shapeRendering="crispEdges">
                {p.art}
              </svg>
              {i === 2 && (
                <>
                  <span className="absolute inset-x-px top-px bottom-0.5 border-2 border-[#2b80e6]" />
                  <Mark className="top-0.5 left-px h-[237px] w-[314px]" />
                  <Badge n={6} className="top-[245px] left-[146px]" />
                </>
              )}
            </button>
          ))}
        </div>
        <div className="flex w-[14px] flex-col border-x border-[#c9c9c9] bg-[#fafafa]">
          <button type="button" aria-label="向上滚动" className="flex h-[15px] items-center justify-center border-y border-[#c9c9c9] bg-white">
            <svg viewBox="0 0 10 6" className="h-[5px] w-2.5" aria-hidden="true"><path d="M5 0l5 6H0z" fill="#777" /></svg>
          </button>
          <div className="h-[232px] border-b border-[#c4c4c4] bg-[#e6e6e6]" />
          <div className="flex-1" />
          <button type="button" aria-label="向下滚动" className="flex h-[15px] items-center justify-center border-y border-[#c9c9c9] bg-white">
            <svg viewBox="0 0 10 6" className="h-[5px] w-2.5" aria-hidden="true"><path d="M5 6l5-6H0z" fill="#777" /></svg>
          </button>
        </div>
      </div>
      <footer className="mt-1.5 flex justify-end gap-1.5">
        <button type="button" className="h-[26px] w-[78px] rounded-sm bg-[#2b7fe3] pt-0.5 text-white">确定</button>
        <button type="button" className="h-[26px] w-[78px] rounded-sm border border-[#c8c8c8] bg-white pt-0.5">取消</button>
      </footer>
    </section>
  );
}

export default function App() {
  return (
    <main
      className="relative flex min-h-screen w-full overflow-hidden bg-white text-xs leading-5 text-[#2b2b2b]"
      style={{ fontFamily: SANS }}
    >
      <NavPanel />
      <ListPanel />
      <div className="ml-1 min-w-0 flex-1 overflow-hidden bg-black">
        <AxisCanvas />
      </div>
      <SectionDialog />
      <RebarDialog />
    </main>
  );
}
